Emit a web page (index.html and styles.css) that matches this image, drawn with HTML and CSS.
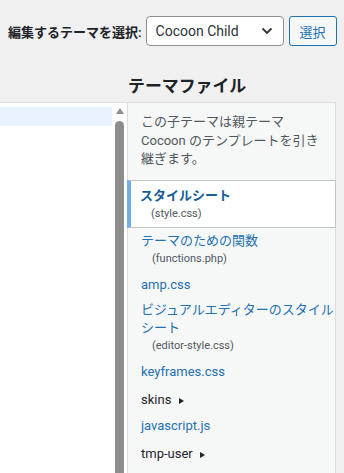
FILE: index.html
```html
<!DOCTYPE html>
<html lang="ja">
<head>
    <meta charset="UTF-8">
    <meta name="viewport" content="width=device-width, initial-scale=1.0">
    <title>テーマファイルエディター</title>
    <link rel="stylesheet" href="styles.css">
</head>
<body>
    <div class="wrap">
        <form class="theme-select">
            <label for="theme">編集するテーマを選択:</label>
            <div class="select-box" id="theme">
                <span>Cocoon Child</span>
                <svg class="chevron" width="12" height="8" viewBox="0 0 12 8">
                    <path d="M1.5 1.5 L6 6 L10.5 1.5" fill="none" stroke="#2c3338" stroke-width="1.8"/>
                </svg>
            </div>
            <button type="button" class="btn-select">選択</button>
        </form>

        <div class="editor-layout">
            <h2 class="side-title">テーマファイル</h2>

            <!-- エディター部分 -->
            <div class="code-editor">
                <div class="code-lines">
                    <div class="line-active"></div>
                </div>
                <div class="scrollbar">
                    <span class="scroll-arrow"></span>
                    <span class="scroll-thumb"></span>
                </div>
            </div>

            <!-- ファイル一覧 -->
            <div class="side-panel">
                <p class="side-note">この子テーマは親テーマ Cocoon のテンプレートを引き継ぎます。</p>
                <ul class="file-list">
                    <li class="current">
                        <a href="#" class="file-name">スタイルシート</a>
                        <span class="file-sub">(style.css)</span>
                    </li>
                    <li>
                        <a href="#" class="file-name">テーマのための関数</a>
                        <span class="file-sub">(functions.php)</span>
                    </li>
                    <li><a href="#" class="file-name">amp.css</a></li>
                    <li>
                        <a href="#" class="file-name">ビジュアルエディターのスタイルシート</a>
                        <span class="file-sub">(editor-style.css)</span>
                    </li>
                    <li><a href="#" class="file-name">keyframes.css</a></li>
                    <li class="folder">skins <span class="caret"></span></li>
                    <li><a href="#" class="file-name">javascript.js</a></li>
                    <li class="folder">tmp-user <span class="caret"></span></li>
                </ul>
            </div>
        </div>
    </div>
</body>
</html>
```

FILE: styles.css
```css
* {
    margin: 0;
    padding: 0;
    box-sizing: border-box;
}

body {
    font-family: Roboto, "Noto Sans CJK JP", sans-serif;
    font-size: 13px;
    background-color: #f0f0f1;
    color: #3c434a;
    height: 473px;
    overflow: hidden;
}

/* テーマ選択 */
.theme-select {
    display: flex;
    align-items: center;
    padding: 16px 0 0 8px;
    height: 46px;
}

.theme-select label {
    font-weight: 600;
    color: #1d2327;
    margin-right: 4px;
}

.select-box {
    width: 138px;
    height: 30px;
    display: flex;
    align-items: center;
    justify-content: space-between;
    padding: 0 10px 0 9px;
    background-color: #fff;
    border: 1px solid #8c8f94;
    border-radius: 4px;
    font-size: 14px;
    color: #2c3338;
}

.btn-select {
    width: 48px;
    height: 30px;
    margin-left: 5px;
    background-color: #f6f7f7;
    border: 1px solid #2271b1;
    border-radius: 3px;
    color: #2271b1;
    font-family: inherit;
    font-size: 13px;
}

/* レイアウト */
.editor-layout {
    display: grid;
    grid-template-columns: 127px 209px;
    grid-template-rows: 56px 1fr;
    height: 427px;
}

.side-title {
    grid-column: 2;
    align-self: end;
    font-size: 16.9px;
    font-weight: 600;
    color: #1d2327;
    line-height: 24px;
    padding-bottom: 4px;
    padding-left: 1px;
}

/* エディター */
.code-editor {
    grid-column: 1;
    grid-row: 2;
    display: flex;
    background-color: #fff;
    border-top: 1px solid #dcdcde;
    padding-top: 4px;
}

.code-lines {
    width: 112px;
}

.line-active {
    height: 19px;
    background-color: #e8f2ff;
}

.scrollbar {
    width: 9px;
    margin-left: 3px;
    display: flex;
    flex-direction: column;
    align-items: center;
}

.scroll-arrow {
    width: 0;
    height: 0;
    margin-top: 1px;
    border-left: 4.5px solid transparent;
    border-right: 4.5px solid transparent;
    border-bottom: 6px solid #8d8d8d;
}

.scroll-thumb {
    flex: 1;
    width: 9px;
    margin-top: 7px;
    background-color: #8d8d8d;
    border-radius: 4.5px 4.5px 0 0;
}

/* ファイル一覧 */
.side-panel {
    grid-column: 2;
    grid-row: 2;
    background-color: #f6f7f7;
    border: 1px solid #dcdcde;
    border-bottom: none;
}

.side-note {
    padding: 10px 8px 0 13px;
    line-height: 18.5px;
    color: #50575e;
}

.file-list {
    list-style: none;
    margin-top: 11.5px;
}

.file-list li {
    padding: 4px 0 3px 13px;
}

.file-name {
    display: block;
    margin-right: -3px;
    color: #2271b1;
    text-decoration: none;
    line-height: 18px;
}

.file-sub {
    display: block;
    margin-bottom: 1px;
    padding-left: 11px;
    font-size: 11px;
    line-height: 18px;
    color: #50575e;
}

.file-list li.current {
    background-color: #fff;
    border: 1px solid #c3c4c7;
    border-left: 4px solid #72aee6;
    margin: 0 -1px 0 -1px;
    padding: 5px 0 4px 9px;
}

.current .file-name {
    font-weight: 600;
    color: #135e96;
    line-height: 19px;
}

.current .file-sub {
    margin-bottom: 0;
}

.file-list li.folder {
    padding: 6px 0 4px 13px;
    color: #1d2327;
    line-height: 19px;
}

.caret {
    display: inline-block;
    margin-left: 4px;
    border-top: 3px solid transparent;
    border-bottom: 3px solid transparent;
    border-left: 5px solid #1d2327;
    vertical-align: 0;
}
```
